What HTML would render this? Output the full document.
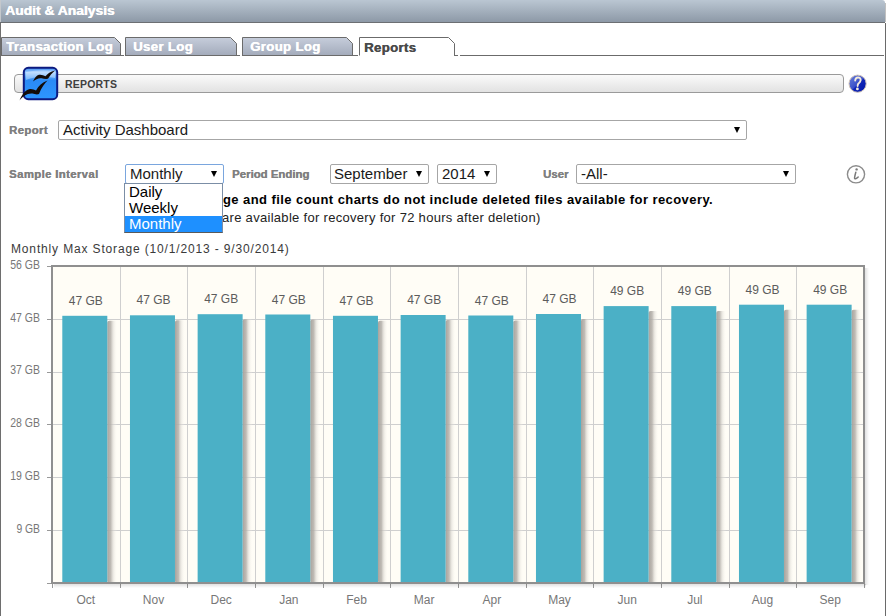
<!DOCTYPE html>
<html><head><meta charset="utf-8">
<style>
html,body{margin:0;padding:0;width:886px;height:616px;overflow:hidden;background:#fff;font-family:"Liberation Sans",sans-serif;}
.a{position:absolute;white-space:nowrap;}
#hdr{position:absolute;left:0;top:0;width:885px;height:22px;background:linear-gradient(#bac6d2,#8d99a7);border-top-right-radius:3px;}
#hline{position:absolute;left:0;top:22px;width:885px;height:1px;background:#6c6f73;}
#hl0{position:absolute;left:0;top:0;width:1px;height:22px;background:#c4c8cc;}
#hr0{position:absolute;left:885px;top:3px;width:1px;height:19px;background:#c0c0c0;}
#lb{position:absolute;left:0;top:23px;width:1px;height:593px;background:#6e6e6e;}
#rb{position:absolute;left:885px;top:23px;width:1px;height:593px;background:#6a6a6a;}
#htitle{left:5px;top:3px;font-size:13px;font-weight:bold;color:#fff;letter-spacing:0px;transform:scaleX(1.065);transform-origin:0 0;text-shadow:0.4px 0 0 #fff;}
.tabt{position:absolute;top:40px;font-size:12px;font-weight:bold;color:#fff;letter-spacing:0.3px;transform:scaleX(1.1);transform-origin:0 0;text-shadow:0.4px 0 0 #fff;}
.lbl{font-size:10px;font-weight:bold;color:#808080;letter-spacing:0.3px;transform:scaleX(1.14);transform-origin:0 0;text-shadow:0.3px 0 0 #808080;}
.sel{position:absolute;border:1px solid #a6a6a6;border-radius:2px;background:#fff;box-sizing:border-box;}
.selt{position:absolute;left:4px;top:0px;font-size:15px;color:#1a1a1a;}
.arr{position:absolute;top:6px;width:0;height:0;border-left:3.2px solid transparent;border-right:3.2px solid transparent;border-top:6px solid #000;}
</style></head><body>
<div id="hdr"></div><div id="hline"></div><div id="hl0"></div><div id="hr0"></div>
<div id="htitle" class="a">Audit &amp; Analysis</div>
<div id="lb"></div><div id="rb"></div>

<svg style="position:absolute;left:0;top:0" width="886" height="60">
<defs><linearGradient id="tg" x1="0" y1="0" x2="0" y2="1"><stop offset="0" stop-color="#c6cddb"/><stop offset="1" stop-color="#a3abbb"/></linearGradient></defs>
<path d="M1.5 55.5 V37.5 H114.5 L120.5 43.5 V55.5" fill="url(#tg)" stroke="#6b6b6b" stroke-width="1"/>
<line x1="1" y1="55.5" x2="124" y2="55.5" stroke="#6b6b6b"/>
<path d="M125.5 55.5 V37.5 H230.5 L236.5 43.5 V55.5" fill="url(#tg)" stroke="#6b6b6b" stroke-width="1"/>
<line x1="125" y1="55.5" x2="240" y2="55.5" stroke="#6b6b6b"/>
<path d="M242.5 55.5 V37.5 H346.5 L352.5 43.5 V55.5" fill="url(#tg)" stroke="#6b6b6b" stroke-width="1"/>
<line x1="242" y1="55.5" x2="358" y2="55.5" stroke="#6b6b6b"/>
<path d="M359.5 55.5 V37.5 H448.5 L454.5 43.5 V55.5" fill="#fff" stroke="#6b6b6b" stroke-width="1"/>
<line x1="454" y1="55.5" x2="458" y2="55.5" stroke="#6b6b6b"/><line x1="460" y1="55.5" x2="884" y2="55.5" stroke="#6b6b6b"/>
</svg>
<div id="t1" class="tabt" style="left:6px;">Transaction Log</div>
<div id="t2" class="tabt" style="left:133px">User Log</div>
<div id="t3" class="tabt" style="left:250px">Group Log</div>
<div id="t4" class="tabt" style="left:364px;top:41px;color:#4a4a4a;text-shadow:0.4px 0 0 #4a4a4a">Reports</div>

<div id="rbar" style="position:absolute;left:14px;top:74px;width:830px;height:19px;border:1px solid #9a9a9a;border-radius:4px;background:linear-gradient(#fafafa,#e2e2e2);box-sizing:border-box;"></div>
<div id="rtitle" class="a" style="left:65px;top:78px;font-size:10.5px;font-weight:bold;color:#404040;letter-spacing:0.2px">REPORTS</div>

<div id="lrep" class="a lbl" style="left:9px;top:125px;">Report</div>
<div class="sel" style="left:58px;top:120px;width:689px;height:20px;"><div class="selt">Activity Dashboard</div><div class="arr" style="left:675px;top:6px"></div></div>

<div id="lsi" class="a lbl" style="left:9px;top:169px;">Sample Interval</div>
<div class="sel" style="left:125px;top:164px;width:99px;height:20px;border-color:#7aa6de"><div class="selt">Monthly</div><div class="arr" style="left:85px"></div></div>
<div id="lpe" class="a lbl" style="left:232px;top:169px;letter-spacing:0px">Period Ending</div>
<div class="sel" style="left:330px;top:164px;width:99px;height:20px;"><div class="selt" style="left:3px">September</div><div class="arr" style="left:85px"></div></div>
<div class="sel" style="left:437px;top:164px;width:60px;height:20px;"><div class="selt">2014</div><div class="arr" style="left:46px"></div></div>
<div id="lus" class="a lbl" style="left:543px;top:169px;letter-spacing:0px">User</div>
<div class="sel" style="left:576px;top:164px;width:220px;height:20px;"><div class="selt">-All-</div><div class="arr" style="left:206px"></div></div>

<div id="note1" class="a" style="left:223px;top:192px;font-size:13px;font-weight:bold;color:#000;letter-spacing:0.43px">ge and file count charts do not include deleted files available for recovery.</div>
<div id="note2" class="a" style="left:222px;top:210px;font-size:13px;color:#222;letter-spacing:0.3px">are available for recovery for 72 hours after deletion)</div>

<div id="dd" style="position:absolute;left:124px;top:183px;width:99px;height:50px;border:1px solid #7b8ea6;border-bottom-color:#5a5a5a;background:#fff;box-sizing:border-box;">
<div class="a" style="left:4px;top:-1px;font-size:15px;color:#000">Daily</div>
<div class="a" style="left:4px;top:15px;font-size:15px;color:#000">Weekly</div>
<div style="position:absolute;left:0;top:32px;width:97px;height:16px;background:#1e90ff"></div>
<div class="a" style="left:4px;top:31px;font-size:15px;color:#fff">Monthly</div>
</div>

<div id="ctitle" class="a" style="left:11px;top:242px;font-size:12px;color:#3a3a3a;letter-spacing:0.85px">Monthly Max Storage (10/1/2013 - 9/30/2014)</div>
<svg style="position:absolute;left:0;top:0" width="886" height="240">
<defs>
<linearGradient id="ib" x1="0" y1="0" x2="0" y2="1"><stop offset="0" stop-color="#3c8cf0"/><stop offset="0.15" stop-color="#9ccaff"/><stop offset="0.4" stop-color="#2a8af5"/><stop offset="1" stop-color="#2d96ff"/></linearGradient>
<linearGradient id="hb" x1="0" y1="0" x2="1" y2="1"><stop offset="0" stop-color="#6a80dc"/><stop offset="0.5" stop-color="#3a50c8"/><stop offset="0.55" stop-color="#1026b8"/><stop offset="1" stop-color="#0016a8"/></linearGradient>
</defs>
<rect x="23.8" y="67.8" width="33.4" height="31.4" rx="4.5" fill="url(#ib)" stroke="#0c1a80" stroke-width="2"/>
<path d="M26 72 Q40 69 55 71 L55 78 Q40 74 26 80 Z" fill="#fff" opacity="0.35"/>
<path d="M33 81.5 C34.5 78 36.5 75.5 39 74.8 C41.5 74.3 43.5 75.5 45.5 76.2 C47.5 73.8 50.5 71.5 55 70.5 C52 73 50 75.5 48 78.8 C45.5 79.2 43.5 78.6 41.5 78.2 C38.5 77.8 35.5 79.2 33 81.5 Z" fill="#140c08"/>
<path d="M19.5 100.5 C22 94.5 25.5 89.8 29 89.2 C32 88.6 34 89.6 36 90.6 C38.5 86 42 82.5 47.5 80.5 C44.5 83.5 41.5 87.5 39 94 C36.5 95 34.5 93.8 32.5 93.5 C27 93 23 96 19.5 100.5 Z" fill="#140c08"/>
<circle cx="857.6" cy="83.7" r="8.6" fill="url(#hb)" stroke="#cfc2b8" stroke-width="1"/>
<path d="M855.2 80.5 Q855.5 77.5 858 77.5 Q860.8 77.5 860.6 80.2 Q860.4 82 859 83 Q857.6 84 857.6 86" fill="none" stroke="#f2eadc" stroke-width="1.9" stroke-linecap="round"/>
<circle cx="857.4" cy="88.9" r="1.4" fill="#f2eadc"/>
<circle cx="856" cy="174.3" r="8.6" fill="none" stroke="#8c8c8c" stroke-width="1.4"/>
<circle cx="856.6" cy="169.4" r="1.2" fill="#7a7a7a"/>
<path d="M855.8 172.2 Q855 175 854.6 177.5 Q854.4 179.4 856 178.6 Q857.2 178 858.2 177" fill="none" stroke="#7a7a7a" stroke-width="1.5" stroke-linecap="round"/>
</svg>
<svg style="position:absolute;left:0;top:0;font-family:'Liberation Sans',sans-serif" width="886" height="616"><defs><linearGradient id="sh" x1="0" x2="1" y1="0" y2="0"><stop offset="0" stop-color="#a8a39d" stop-opacity="1"/><stop offset="0.35" stop-color="#b4b0aa" stop-opacity="0.85"/><stop offset="0.6" stop-color="#d8d5cf" stop-opacity="0.5"/><stop offset="1" stop-color="#fffdf6" stop-opacity="0"/></linearGradient><linearGradient id="shb" x1="0" x2="0" y1="0" y2="1"><stop offset="0" stop-color="#000" stop-opacity="0.12"/><stop offset="1" stop-color="#000" stop-opacity="0"/></linearGradient><linearGradient id="shr" x1="0" x2="1" y1="0" y2="0"><stop offset="0" stop-color="#000" stop-opacity="0.12"/><stop offset="1" stop-color="#000" stop-opacity="0"/></linearGradient></defs><rect x="52.0" y="266.0" width="812.0" height="317.0" fill="#fffdf6"/><line x1="52.0" x2="864.0" y1="319.5" y2="319.5" stroke="#cfcfcf" stroke-width="1"/><line x1="52.0" x2="864.0" y1="372.5" y2="372.5" stroke="#cfcfcf" stroke-width="1"/><line x1="52.0" x2="864.0" y1="424.5" y2="424.5" stroke="#cfcfcf" stroke-width="1"/><line x1="52.0" x2="864.0" y1="477.5" y2="477.5" stroke="#cfcfcf" stroke-width="1"/><line x1="52.0" x2="864.0" y1="530.5" y2="530.5" stroke="#cfcfcf" stroke-width="1"/><line x1="120.5" x2="120.5" y1="266.0" y2="583.0" stroke="#cfcfcf" stroke-width="1"/><line x1="187.5" x2="187.5" y1="266.0" y2="583.0" stroke="#cfcfcf" stroke-width="1"/><line x1="255.5" x2="255.5" y1="266.0" y2="583.0" stroke="#cfcfcf" stroke-width="1"/><line x1="323.5" x2="323.5" y1="266.0" y2="583.0" stroke="#cfcfcf" stroke-width="1"/><line x1="390.5" x2="390.5" y1="266.0" y2="583.0" stroke="#cfcfcf" stroke-width="1"/><line x1="458.5" x2="458.5" y1="266.0" y2="583.0" stroke="#cfcfcf" stroke-width="1"/><line x1="526.5" x2="526.5" y1="266.0" y2="583.0" stroke="#cfcfcf" stroke-width="1"/><line x1="593.5" x2="593.5" y1="266.0" y2="583.0" stroke="#cfcfcf" stroke-width="1"/><line x1="661.5" x2="661.5" y1="266.0" y2="583.0" stroke="#cfcfcf" stroke-width="1"/><line x1="729.5" x2="729.5" y1="266.0" y2="583.0" stroke="#cfcfcf" stroke-width="1"/><line x1="796.5" x2="796.5" y1="266.0" y2="583.0" stroke="#cfcfcf" stroke-width="1"/><line x1="47" x2="52" y1="266.5" y2="266.5" stroke="#999" stroke-width="1"/><line x1="47" x2="52" y1="319.5" y2="319.5" stroke="#999" stroke-width="1"/><line x1="47" x2="52" y1="372.5" y2="372.5" stroke="#999" stroke-width="1"/><line x1="47" x2="52" y1="424.5" y2="424.5" stroke="#999" stroke-width="1"/><line x1="47" x2="52" y1="477.5" y2="477.5" stroke="#999" stroke-width="1"/><line x1="47" x2="52" y1="530.5" y2="530.5" stroke="#999" stroke-width="1"/><line x1="47" x2="52" y1="583.5" y2="583.5" stroke="#999" stroke-width="1"/><line x1="52.5" x2="52.5" y1="583.0" y2="588.0" stroke="#999" stroke-width="1"/><line x1="120.5" x2="120.5" y1="583.0" y2="588.0" stroke="#999" stroke-width="1"/><line x1="187.5" x2="187.5" y1="583.0" y2="588.0" stroke="#999" stroke-width="1"/><line x1="255.5" x2="255.5" y1="583.0" y2="588.0" stroke="#999" stroke-width="1"/><line x1="323.5" x2="323.5" y1="583.0" y2="588.0" stroke="#999" stroke-width="1"/><line x1="390.5" x2="390.5" y1="583.0" y2="588.0" stroke="#999" stroke-width="1"/><line x1="458.5" x2="458.5" y1="583.0" y2="588.0" stroke="#999" stroke-width="1"/><line x1="526.5" x2="526.5" y1="583.0" y2="588.0" stroke="#999" stroke-width="1"/><line x1="593.5" x2="593.5" y1="583.0" y2="588.0" stroke="#999" stroke-width="1"/><line x1="661.5" x2="661.5" y1="583.0" y2="588.0" stroke="#999" stroke-width="1"/><line x1="729.5" x2="729.5" y1="583.0" y2="588.0" stroke="#999" stroke-width="1"/><line x1="796.5" x2="796.5" y1="583.0" y2="588.0" stroke="#999" stroke-width="1"/><line x1="864.5" x2="864.5" y1="583.0" y2="588.0" stroke="#999" stroke-width="1"/><rect x="107.30" y="320.80" width="10" height="262.20" rx="2" fill="url(#sh)"/><rect x="62.30" y="315.80" width="45.0" height="267.20" fill="#4bb0c6"/><text x="85.83" y="304.80" text-anchor="middle" font-size="12" fill="#5c5c5c">47 GB</text><text x="85.83" y="604" text-anchor="middle" font-size="12" fill="#777">Oct</text><rect x="174.97" y="320.30" width="10" height="262.70" rx="2" fill="url(#sh)"/><rect x="129.97" y="315.30" width="45.0" height="267.70" fill="#4bb0c6"/><text x="153.50" y="304.30" text-anchor="middle" font-size="12" fill="#5c5c5c">47 GB</text><text x="153.50" y="604" text-anchor="middle" font-size="12" fill="#777">Nov</text><rect x="242.63" y="319.20" width="10" height="263.80" rx="2" fill="url(#sh)"/><rect x="197.63" y="314.20" width="45.0" height="268.80" fill="#4bb0c6"/><text x="221.17" y="303.20" text-anchor="middle" font-size="12" fill="#5c5c5c">47 GB</text><text x="221.17" y="604" text-anchor="middle" font-size="12" fill="#777">Dec</text><rect x="310.30" y="319.50" width="10" height="263.50" rx="2" fill="url(#sh)"/><rect x="265.30" y="314.50" width="45.0" height="268.50" fill="#4bb0c6"/><text x="288.83" y="303.50" text-anchor="middle" font-size="12" fill="#5c5c5c">47 GB</text><text x="288.83" y="604" text-anchor="middle" font-size="12" fill="#777">Jan</text><rect x="377.97" y="320.80" width="10" height="262.20" rx="2" fill="url(#sh)"/><rect x="332.97" y="315.80" width="45.0" height="267.20" fill="#4bb0c6"/><text x="356.50" y="304.80" text-anchor="middle" font-size="12" fill="#5c5c5c">47 GB</text><text x="356.50" y="604" text-anchor="middle" font-size="12" fill="#777">Feb</text><rect x="445.63" y="320.00" width="10" height="263.00" rx="2" fill="url(#sh)"/><rect x="400.63" y="315.00" width="45.0" height="268.00" fill="#4bb0c6"/><text x="424.17" y="304.00" text-anchor="middle" font-size="12" fill="#5c5c5c">47 GB</text><text x="424.17" y="604" text-anchor="middle" font-size="12" fill="#777">Mar</text><rect x="513.30" y="320.50" width="10" height="262.50" rx="2" fill="url(#sh)"/><rect x="468.30" y="315.50" width="45.0" height="267.50" fill="#4bb0c6"/><text x="491.83" y="304.50" text-anchor="middle" font-size="12" fill="#5c5c5c">47 GB</text><text x="491.83" y="604" text-anchor="middle" font-size="12" fill="#777">Apr</text><rect x="580.97" y="319.00" width="10" height="264.00" rx="2" fill="url(#sh)"/><rect x="535.97" y="314.00" width="45.0" height="269.00" fill="#4bb0c6"/><text x="559.50" y="303.00" text-anchor="middle" font-size="12" fill="#5c5c5c">47 GB</text><text x="559.50" y="604" text-anchor="middle" font-size="12" fill="#777">May</text><rect x="648.63" y="311.10" width="10" height="271.90" rx="2" fill="url(#sh)"/><rect x="603.63" y="306.10" width="45.0" height="276.90" fill="#4bb0c6"/><text x="627.17" y="295.10" text-anchor="middle" font-size="12" fill="#5c5c5c">49 GB</text><text x="627.17" y="604" text-anchor="middle" font-size="12" fill="#777">Jun</text><rect x="716.30" y="311.10" width="10" height="271.90" rx="2" fill="url(#sh)"/><rect x="671.30" y="306.10" width="45.0" height="276.90" fill="#4bb0c6"/><text x="694.83" y="295.10" text-anchor="middle" font-size="12" fill="#5c5c5c">49 GB</text><text x="694.83" y="604" text-anchor="middle" font-size="12" fill="#777">Jul</text><rect x="783.97" y="309.70" width="10" height="273.30" rx="2" fill="url(#sh)"/><rect x="738.97" y="304.70" width="45.0" height="278.30" fill="#4bb0c6"/><text x="762.50" y="293.70" text-anchor="middle" font-size="12" fill="#5c5c5c">49 GB</text><text x="762.50" y="604" text-anchor="middle" font-size="12" fill="#777">Aug</text><rect x="851.63" y="309.70" width="10" height="273.30" rx="2" fill="url(#sh)"/><rect x="806.63" y="304.70" width="45.0" height="278.30" fill="#4bb0c6"/><text x="830.17" y="293.70" text-anchor="middle" font-size="12" fill="#5c5c5c">49 GB</text><text x="830.17" y="604" text-anchor="middle" font-size="12" fill="#777">Sep</text><rect x="54.0" y="584.0" width="812.0" height="4" fill="url(#shb)"/><rect x="865.0" y="268.0" width="4" height="317.0" fill="url(#shr)"/><rect x="52.0" y="266.0" width="812.0" height="317.0" fill="none" stroke="#8f8f8f" stroke-width="2"/><text x="40" y="268.80" text-anchor="end" font-size="12" fill="#777" textLength="29.7" lengthAdjust="spacingAndGlyphs">56 GB</text><text x="40" y="321.63" text-anchor="end" font-size="12" fill="#777" textLength="29.7" lengthAdjust="spacingAndGlyphs">47 GB</text><text x="40" y="374.47" text-anchor="end" font-size="12" fill="#777" textLength="29.7" lengthAdjust="spacingAndGlyphs">37 GB</text><text x="40" y="427.30" text-anchor="end" font-size="12" fill="#777" textLength="29.7" lengthAdjust="spacingAndGlyphs">28 GB</text><text x="40" y="480.13" text-anchor="end" font-size="12" fill="#777" textLength="29.7" lengthAdjust="spacingAndGlyphs">19 GB</text><text x="40" y="532.97" text-anchor="end" font-size="12" fill="#777" textLength="23.6" lengthAdjust="spacingAndGlyphs">9 GB</text></svg>
</body></html>
